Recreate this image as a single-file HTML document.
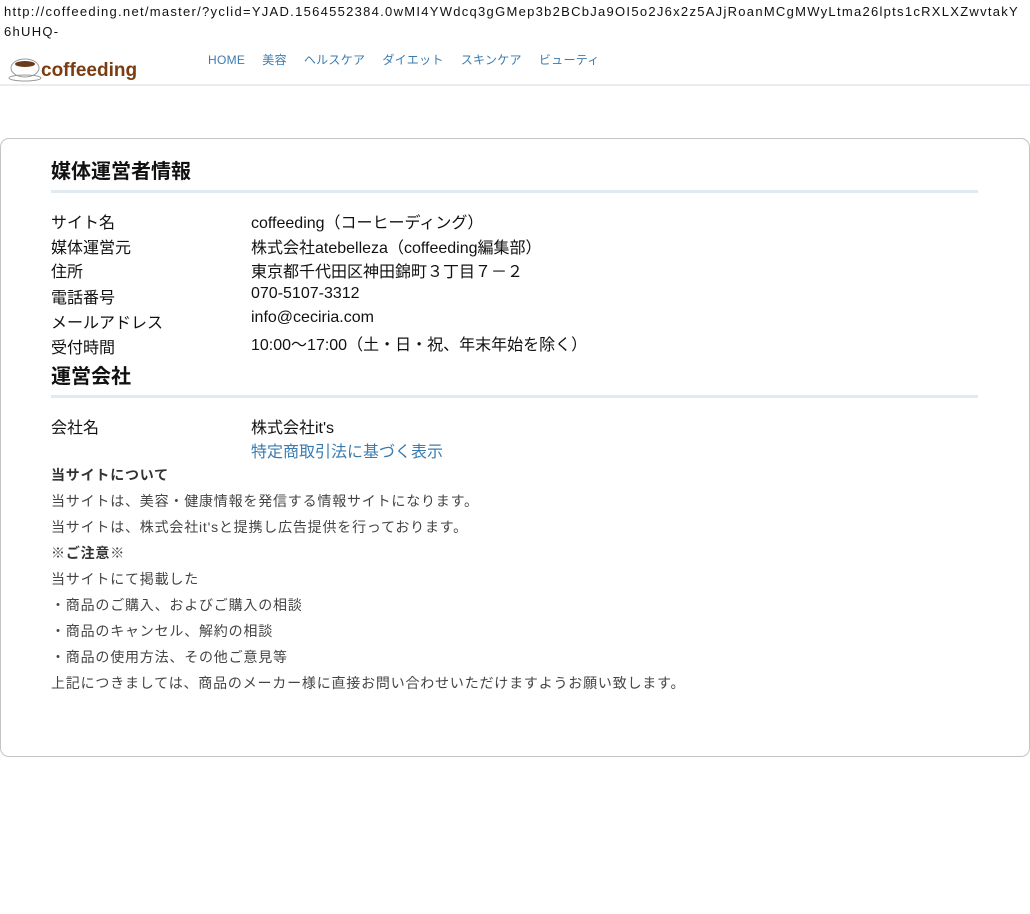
<!DOCTYPE html>
<html><head><meta charset="utf-8"><style>
body{margin:0;width:1030px;height:914px;background:#fff;font-family:"Liberation Sans","Noto Sans CJK JP",sans-serif;color:#222;position:relative;overflow:hidden}
.url{position:absolute;left:4px;top:2px;font-size:13px;line-height:20px;width:1026px;white-space:nowrap;color:#111;letter-spacing:1.28px}
.logo{position:absolute;left:8px;top:54px;height:28px}
.nav{position:absolute;left:208px;top:51px;font-size:12px;color:#3a7bb0;letter-spacing:0.3px}
.nav span{margin-right:17px}
.hr{position:absolute;left:0;top:84px;width:1030px;height:2px;background:#e8edf2}
.box{position:absolute;left:0;top:138px;width:1028px;height:617px;border:1px solid #c4c4c4;border-radius:9px}
.in{position:absolute;left:51px;width:927px}
h2{margin:0;font-size:20px;font-weight:bold;color:#111;height:35px;border-bottom:3px solid #e1e9f1}
.row{position:absolute;left:51px;font-size:16px;color:#111}
.row b{position:absolute;left:200px;top:0;font-weight:normal;white-space:nowrap}
.p{position:absolute;left:51px;font-size:14px;color:#444;line-height:26px;letter-spacing:0.8px;white-space:nowrap}
</style></head><body>
<div class="url">http://coffeeding.net/master/?yclid=YJAD.1564552384.0wMI4YWdcq3gGMep3b2BCbJa9OI5o2J6x2z5AJjRoanMCgMWyLtma26lpts1cRXLXZwvtakY<br>6hUHQ-</div>
<div class="logo"><svg width="140" height="28"><ellipse cx="17" cy="14" rx="14" ry="9" fill="#fff" stroke="#999"/><ellipse cx="17" cy="10" rx="10" ry="3" fill="#6b3a1a"/><ellipse cx="17" cy="24" rx="16" ry="3" fill="none" stroke="#999"/><text x="33" y="22" font-family="Liberation Sans" font-weight="bold" font-size="19" fill="#7a3c10">coffeeding</text></svg></div>
<div class="nav"><span>HOME</span><span>美容</span><span>ヘルスケア</span><span>ダイエット</span><span>スキンケア</span><span>ビューティ</span></div>
<div class="hr"></div>
<div class="box"></div>
<div class="in" style="top:155px"><h2>媒体運営者情報</h2></div>
<div class="row" style="top:209px">サイト名<b>coffeeding（コーヒーディング）</b></div>
<div class="row" style="top:234px">媒体運営元<b>株式会社atebelleza（coffeeding編集部）</b></div>
<div class="row" style="top:258px">住所<b>東京都千代田区神田錦町３丁目７－２</b></div>
<div class="row" style="top:284px">電話番号<b style="top:1px">070-5107-3312</b></div>
<div class="row" style="top:309px">メールアドレス<b style="top:0px">info@ceciria.com</b></div>
<div class="row" style="top:334px">受付時間<b style="top:-3px">10:00～17:00（土・日・祝、年末年始を除く）</b></div>
<div class="in" style="top:360px"><h2>運営会社</h2></div>
<div class="row" style="top:414px">会社名<b>株式会社it's</b></div>
<div class="row" style="top:438px"><b style="color:#3a7bb0">特定商取引法に基づく表示</b></div>
<div class="p" style="top:462px"><b style="color:#333">当サイトについて</b><br>当サイトは、美容・健康情報を発信する情報サイトになります。<br>当サイトは、株式会社it'sと提携し広告提供を行っております。<br>※<b style="color:#333">ご注意</b>※<br>当サイトにて掲載した<br>・商品のご購入、およびご購入の相談<br>・商品のキャンセル、解約の相談<br>・商品の使用方法、その他ご意見等<br>上記につきましては、商品のメーカー様に直接お問い合わせいただけますようお願い致します。</div>
</body></html>
